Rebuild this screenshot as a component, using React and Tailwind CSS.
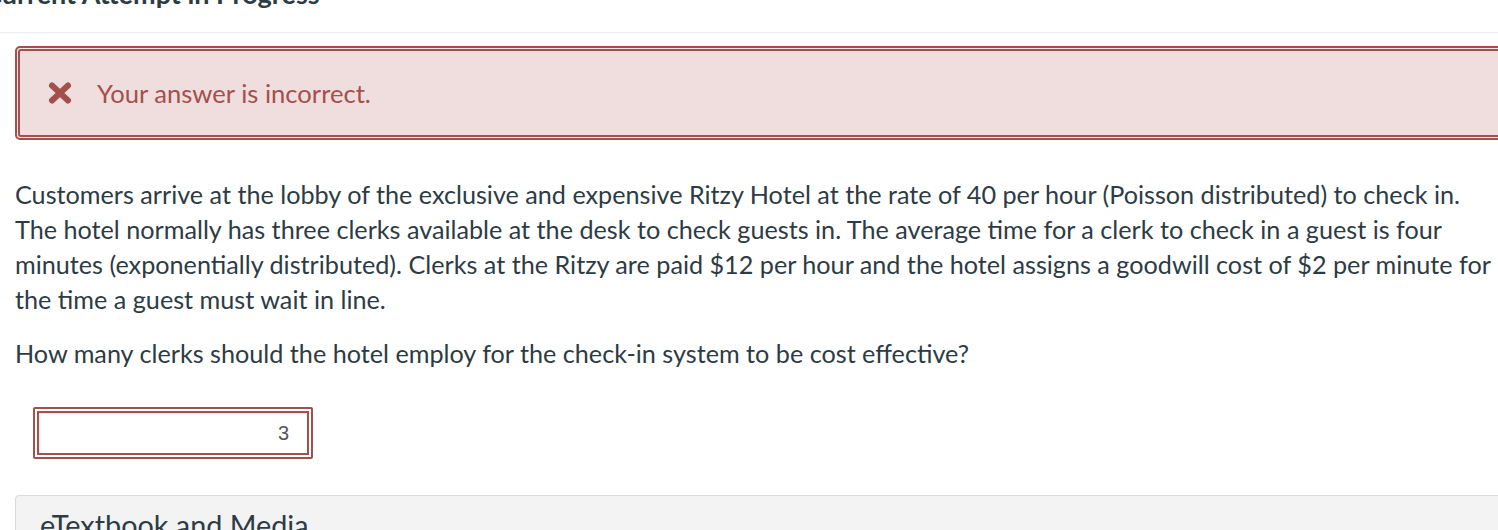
import React from 'react';

function TimesIcon() {
  return (
    <svg width="26" height="24" viewBox="0 0 26 24" aria-hidden="true">
      <path d="M5 4.5 L21 19.5 M21 4.5 L5 19.5" stroke="#a3504d" strokeWidth="6" strokeLinecap="round" />
    </svg>
  );
}

export default function App() {
  return (
    <div className="w-[1498px] h-[530px] overflow-hidden bg-white font-['Lato','Noto_Sans',sans-serif] text-[#2d3b45]">
      {/* Heading (cut off at top of screenshot) */}
      <h2 className="-mt-[22px] -ml-[16px] h-[32px] text-[27px] leading-[32px] font-bold whitespace-nowrap">
        Current Attempt in Progress
      </h2>
      <div className="mt-[22px] border-t border-[#ededed]" />

      <div className="pl-[15px] w-[1506px]">
        {/* Feedback alert */}
        <div className="mt-[13px] rounded-[5px] border-2 border-[#a3504d] p-px bg-[#f5e8e8]">
          <div className="flex items-center h-[88px] rounded-[3px] border-2 border-[#a3504d] bg-[#f0dede] pl-[27px]">
            <TimesIcon />
            <span className="ml-[24px] text-[25.6px] text-[#a3504d]">Your answer is incorrect.</span>
          </div>
        </div>

        {/* Question */}
        <div className="mt-[37px] text-[25.2px] leading-[35px] w-[1490px]">
          <p>
            Customers arrive at the lobby of the exclusive and expensive Ritzy Hotel at the rate of 40 per hour (Poisson distributed) to check in. The hotel normally has three clerks available at the desk to check guests in. The average time for a clerk to check in a guest is four minutes (exponentially distributed). Clerks at the Ritzy are paid $12 per hour and the hotel assigns a goodwill cost of $2 per minute for the time a guest must wait in line.
          </p>
          <p className="mt-[19px]">
            How many clerks should the hotel employ for the check-in system to be cost effective?
          </p>
        </div>

        {/* Answer input */}
        <div className="mt-[36px] ml-[18px] w-[280px] h-[52px] rounded-[2px] border-2 border-[#a3504d] p-[2px] bg-white">
          <div className="h-full border-2 border-[#a3504d] bg-white shadow-[inset_1px_1px_2px_rgba(0,0,0,0.12)] flex items-center justify-end pr-[18px] font-['Liberation_Sans',Arial,sans-serif] text-[20px] text-[#555]">
            3
          </div>
        </div>

        {/* eTextbook panel */}
        <div className="mt-[36px] h-[60px] rounded-[4px] border border-[#dadada] bg-[#f3f3f3] px-[24px] pt-[13px]">
          <span className="text-[28.8px] leading-[32px] text-[#2d3b45]">eTextbook and Media</span>
        </div>
      </div>
    </div>
  );
}
